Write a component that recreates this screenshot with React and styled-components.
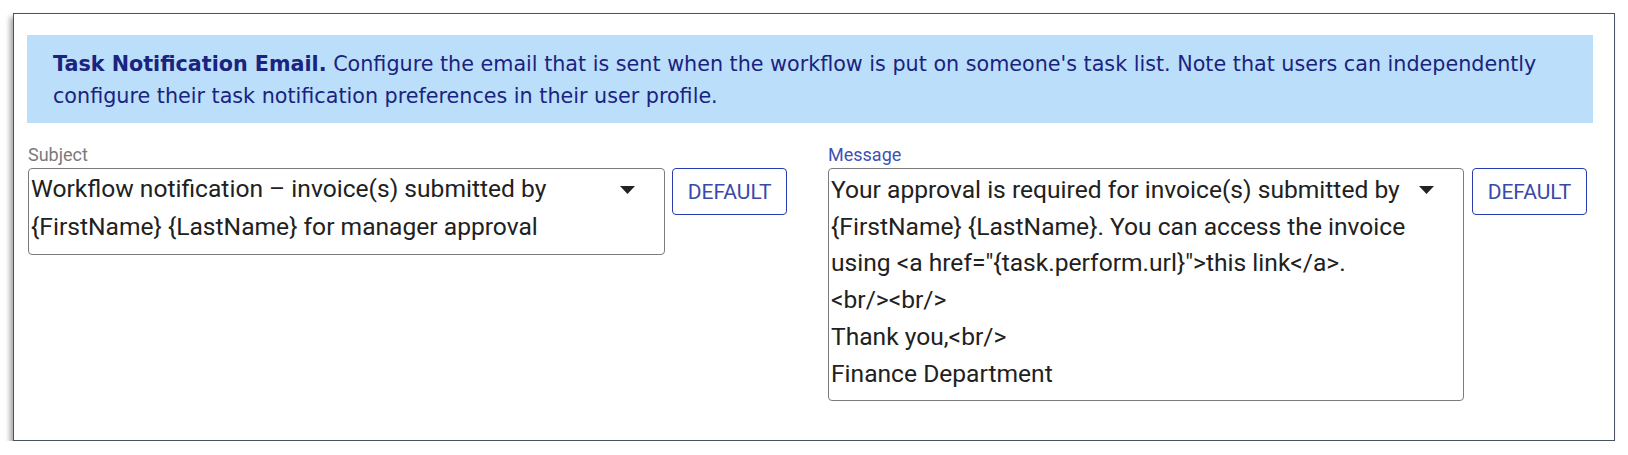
import React from 'react'
import styled, { createGlobalStyle } from 'styled-components'

const GlobalStyle = createGlobalStyle`
  body {
    margin: 0;
    background: #ffffff;
  }
`

const Frame = styled.div`
  box-sizing: border-box;
  width: 1602px;
  margin: 13px 0 0 13px;
  padding: 21px 21px 39px 13px;
  border: 1.5px solid #4a5262;
  background: #ffffff;
  box-shadow: -3px 4px 5px rgba(0, 0, 0, 0.35);
`

const Banner = styled.div`
  background: #bbdefb;
  padding: 14px 26px 11px;
  font-family: "DejaVu Sans", Verdana, sans-serif;
  font-size: 20.7px;
  line-height: 31.5px;
  color: #1a237e;
  white-space: nowrap;
`

const Fields = styled.div`
  display: grid;
  grid-template-columns: 759px 759px;
  column-gap: 41px;
  margin-top: 21px;
  padding-left: 1px;
`

const Field = styled.div`
  display: flex;
  flex-direction: column;
`

const Label = styled.div`
  font-family: Roboto, "Liberation Sans", sans-serif;
  font-size: 18px;
  line-height: 21px;
  color: ${(p) => (p.$active ? '#3f51b5' : '#7a7a7a')};
  margin-bottom: 3px;
`

const Row = styled.div`
  display: flex;
  align-items: flex-start;
  gap: ${(p) => p.$gap}px;
`

const SelectBox = styled.div`
  box-sizing: border-box;
  width: ${(p) => p.$width}px;
  min-height: ${(p) => p.$height}px;
  display: flex;
  align-items: flex-start;
  border: 1.5px solid #7c7c7c;
  border-radius: 4px;
  padding: ${(p) => p.$padTop}px 0 0 2px;
  font-family: Roboto, "Liberation Sans", sans-serif;
  font-size: 24.6px;
  line-height: ${(p) => p.$lineHeight}px;
  color: #212121;
`

const Value = styled.div`
  flex: 1;
  white-space: pre-line;
`

const Arrow = styled.svg`
  flex: none;
  width: 15px;
  height: 8px;
  margin: ${(p) => p.$top}px 29px 0 0;
`

const DefaultButton = styled.button`
  box-sizing: border-box;
  width: 115px;
  height: 47px;
  padding: 0;
  border: 1.5px solid #283cb0;
  border-radius: 4px;
  background: #ffffff;
  font-family: Roboto, "Liberation Sans", sans-serif;
  font-size: 21px;
  color: #3949ab;
  cursor: pointer;
`

const DropArrow = ({ top }) => (
  <Arrow $top={top} viewBox="0 0 15 8">
    <path d="M0 0 H15 L7.5 8 Z" fill="#222" />
  </Arrow>
)

const subjectText = `Workflow notification – invoice(s) submitted by
{FirstName} {LastName} for manager approval`

const messageText = `Your approval is required for invoice(s) submitted by
{FirstName} {LastName}. You can access the invoice
using <a href="{task.perform.url}">this link</a>.
<br/><br/>
Thank you,<br/>
Finance Department`

export default function App() {
  return (
    <>
      <GlobalStyle />
      <Frame>
        <Banner>
          <b>Task Notification Email.</b> Configure the email that is sent when the workflow is put on someone's task list. Note that users can independently
          <br />
          configure their task notification preferences in their user profile.
        </Banner>
        <Fields>
          <Field>
            <Label>Subject</Label>
            <Row $gap={7}>
              <SelectBox $width={638} $height={87} $padTop={1} $lineHeight={38}>
                <Value>{subjectText}</Value>
                <DropArrow top={16} />
              </SelectBox>
              <DefaultButton>DEFAULT</DefaultButton>
            </Row>
          </Field>
          <Field>
            <Label $active>Message</Label>
            <Row $gap={8}>
              <SelectBox $width={636} $height={233} $padTop={3} $lineHeight={36.7}>
                <Value>{messageText}</Value>
                <DropArrow top={14} />
              </SelectBox>
              <DefaultButton>DEFAULT</DefaultButton>
            </Row>
          </Field>
        </Fields>
      </Frame>
    </>
  )
}
